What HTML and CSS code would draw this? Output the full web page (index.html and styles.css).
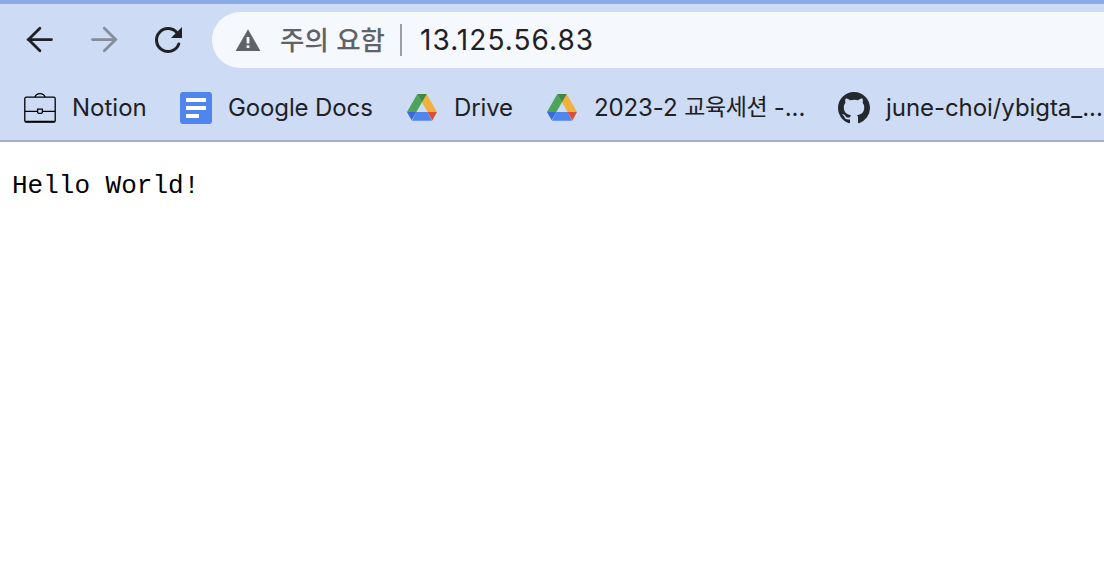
FILE: index.html
```
<!DOCTYPE html>
<html lang="ko">
<head>
<meta charset="utf-8">
<title>13.125.56.83</title>
<link rel="stylesheet" href="styles.css">
</head>
<body>
<svg class="defs" aria-hidden="true">
  <symbol id="drive" viewBox="0 0 32 32">
    <path fill="#f0b23c" d="M11.3 2h9.4L31 20H21.6z"/>
    <path fill="#4da35a" d="M11.3 2 16 10.2 10.3 20H1z"/>
    <path fill="#3f8746" d="M11.3 2h9.4L16 10.2z"/>
    <path fill="#5185ee" d="M6 28.7h20L21.6 20H10.3z"/>
    <path fill="#386ada" d="M1 20h9.3L5.7 28.3z"/>
    <path fill="#d94e36" d="M21.6 20H31l-4.7 8.4z"/>
  </symbol>
</svg>
<header class="browser">
  <div class="toolbar">
    <svg class="nav" viewBox="0 0 32 32"><path d="M27.5 15.6H4M15.9 4.3 4.5 15.6l11.4 11.2"/></svg>
    <svg class="nav nav-off" viewBox="0 0 32 32"><path d="M4.5 15.6H28M16.3 4.3 27.7 15.6 16.3 26.8"/></svg>
    <svg class="nav" viewBox="0 0 32 32"><path class="ring" d="M25.4 9.4A11.5 11.5 0 1 0 26.8 20"/><path class="solid" d="M30 3V14H19z"/></svg>
    <div class="address">
      <svg class="warning" viewBox="0 0 26 24"><path fill="#5f6368" d="M13 1.3 25.4 23H.6z"/><path fill="#f5f8fd" d="M11.6 9h2.8v6.5h-2.8zM11.6 17.3h2.8V20h-2.8z"/></svg>
      <span class="security">주의 요함</span>
      <span class="divider"></span>
      <span class="url">13.125.56.83</span>
    </div>
  </div>
  <nav class="bookmarks">
    <a class="bookmark"><svg class="icon" viewBox="0 0 32 32"><g fill="none" stroke="#000" stroke-width="1.3"><rect x=".8" y="5.2" width="30.4" height="25" rx="1.5"/><path d="M11 5c.8-2.3 2.3-3.3 5-3.3s4.2 1 5 3.3M1 19.3h12.6M18.4 19.3H31M1 29.5h30"/><path d="M13.6 17.2h4.8v3.2l-1 1h-2.8l-1-1z"/></g></svg><span class="label">Notion</span></a>
    <a class="bookmark"><svg class="icon" viewBox="0 0 32 32"><rect width="32" height="32" rx="3" fill="#5185ee"/><path fill="#fff" d="M6 6h20v4H6zM6 14h20v4H6zM6 22h13v4H6z"/></svg><span class="label docs">Google Docs</span></a>
    <a class="bookmark"><svg class="icon"><use href="#drive"/></svg><span class="label docs">Drive</span></a>
    <a class="bookmark"><svg class="icon"><use href="#drive"/></svg><span class="label session">2023-2 <span class="hangul">교육세션</span> -...</span></a>
    <a class="bookmark"><svg class="icon" viewBox="0 0 16 16"><path fill="#24292f" d="M8 0C3.58 0 0 3.58 0 8c0 3.54 2.29 6.53 5.47 7.59.4.07.55-.17.55-.38 0-.19-.01-.82-.01-1.49-2.01.37-2.53-.49-2.69-.94-.09-.23-.48-.94-.82-1.13-.28-.15-.68-.52-.01-.53.63-.01 1.08.58 1.23.82.72 1.21 1.87.87 2.33.66.07-.52.28-.87.51-1.07-1.78-.2-3.64-.89-3.64-3.95 0-.87.31-1.59.82-2.15-.08-.2-.36-1.02.08-2.12 0 0 .67-.21 2.2.82.64-.18 1.32-.27 2-.27s1.36.09 2 .27c1.53-1.04 2.2-.82 2.2-.82.44 1.1.16 1.92.08 2.12.51.56.82 1.27.82 2.15 0 3.07-1.87 3.75-3.65 3.95.29.25.54.73.54 1.48 0 1.07-.01 1.93-.01 2.2 0 .21.15.46.55.38A8.01 8.01 0 0 0 16 8c0-4.42-3.58-8-8-8z"/></svg><span class="label repo">june-choi/ybigta_...</span></a>
  </nav>
</header>
<main class="page"><pre class="message">Hello World!</pre></main>
</body>
</html>
```
FILE: styles.css
```
* { box-sizing: border-box; }
body {
  margin: 0;
  height: 588px;
  overflow: hidden;
  background: #fff;
  font-family: Inter, "Noto Sans CJK KR", sans-serif;
  color: #202124;
}
.defs { display: none; }
.browser {
  height: 142px;
  background: #cddbf4;
  border-top: 4px solid #8aaae5;
  border-bottom: 2px solid #a7aec4;
}
.toolbar {
  display: flex;
  align-items: center;
  gap: 32px;
  height: 72px;
  padding-left: 24px;
}
.nav {
  flex: none;
  width: 32px;
  height: 32px;
  fill: none;
  stroke: #202124;
  stroke-width: 2.8;
  stroke-linecap: round;
  stroke-linejoin: round;
}
.nav-off { stroke: #858d9d; }
.nav .ring { stroke-width: 3; }
.nav .solid { fill: #202124; stroke: none; }
.address {
  display: flex;
  align-items: center;
  flex: 1;
  height: 56px;
  margin-left: -4px;
  padding-left: 23px;
  border-radius: 28px 0 0 28px;
  background: #f5f8fd;
  white-space: nowrap;
}
.warning { width: 26px; height: 24px; margin-right: 19px; }
.security {
  width: 120px;
  padding-bottom: 3px;
  color: #5f6368;
  font: 500 26.5px/38px "Noto Sans CJK KR", sans-serif;
}
.divider { width: 2px; height: 32px; margin-right: 18px; background: #9b9fa5; }
.url { font-size: 28px; line-height: 40px; letter-spacing: 1.05px; }
.bookmarks {
  display: grid;
  grid-template-columns: 156px 226px 140px 292px 266px;
  align-items: center;
  height: 64px;
  padding-left: 24px;
}
.bookmark { display: flex; align-items: center; gap: 16px; white-space: nowrap; }
.icon { flex: none; width: 32px; height: 32px; }
.label { font-size: 24px; line-height: 32px; }
.docs { letter-spacing: -0.12px; }
.session { letter-spacing: -0.1px; }
.repo { letter-spacing: -0.06px; }
.hangul {
  font-family: "Noto Sans CJK KR", sans-serif;
  font-size: 23px;
  line-height: 1;
  letter-spacing: -0.4px;
  vertical-align: 1px;
}
.message {
  margin: 0;
  padding: 28px 12px;
  color: #000;
  font: 26px/32px "Courier New", "Liberation Mono", monospace;
}
```
